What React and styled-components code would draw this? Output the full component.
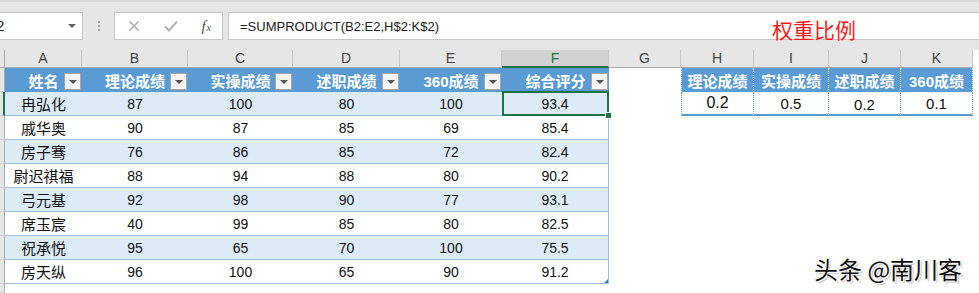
import React from 'react';
import styled, { createGlobalStyle } from 'styled-components';

const GlobalStyle = createGlobalStyle`
  body {
    margin: 0;
    background: #fff;
  }
`;

const FONT = `"Liberation Sans", "Noto Sans CJK SC", sans-serif`;
const GREEN = '#217346';
const BLUE = '#5b9bd5';
const LINE = '#9bc2e6';

const COLS = [
  { key: 'A', w: 77 },
  { key: 'B', w: 106 },
  { key: 'C', w: 105 },
  { key: 'D', w: 107 },
  { key: 'E', w: 102 },
  { key: 'F', w: 107 },
  { key: 'G', w: 72 },
  { key: 'H', w: 73 },
  { key: 'I', w: 75 },
  { key: 'J', w: 72 },
  { key: 'K', w: 72 },
];

const HEADERS = ['姓名', '理论成绩', '实操成绩', '述职成绩', '360成绩', '综合评分'];

const ROWS = [
  ['冉弘化', 87, 100, 80, 100, '93.4'],
  ['戚华奥', 90, 87, 85, 69, '85.4'],
  ['房子骞', 76, 86, 85, 72, '82.4'],
  ['尉迟祺福', 88, 94, 88, 80, '90.2'],
  ['弓元基', 92, 98, 90, 77, '93.1'],
  ['席玉宸', 40, 99, 85, 80, '82.5'],
  ['祝承悦', 95, 65, 70, 100, '75.5'],
  ['房天纵', 96, 100, 65, 90, '91.2'],
];

const WEIGHTS = [
  { label: '理论成绩', value: '0.2', size: 16 },
  { label: '实操成绩', value: '0.5', size: 15 },
  { label: '述职成绩', value: '0.2', size: 15, low: true },
  { label: '360成绩', value: '0.1', size: 15 },
];

const Page = styled.div`
  position: relative;
  width: 979px;
  height: 293px;
  overflow: hidden;
  background: #e6e6e6;
  font-family: ${FONT};
`;

const TopStrip = styled.div`
  height: 12px;
  box-sizing: border-box;
  border-top: 2px solid #d9d9d9;
`;

const FormulaBar = styled.div`
  display: flex;
  height: 28px;
`;

const NameBox = styled.div`
  width: 83px;
  box-sizing: border-box;
  background: #fff;
  border: 1px solid #c6c6c6;
  border-left: none;
  display: flex;
  align-items: center;
  justify-content: space-between;
  padding-right: 6px;
  overflow: hidden;
  font-size: 14px;
  color: #222;
`;

const NameText = styled.span`
  margin-left: -12px;
`;

const DropArrow = styled.span`
  width: 0;
  height: 0;
  border-left: 4px solid transparent;
  border-right: 4px solid transparent;
  border-top: 4px solid #666;
`;

const Grip = styled.div`
  width: 31px;
  display: flex;
  flex-direction: column;
  align-items: center;
  justify-content: center;
  gap: 2px;
`;

const GripDot = styled.span`
  width: 2px;
  height: 2px;
  background: #a0a0a0;
`;

const FxBox = styled.div`
  width: 109px;
  box-sizing: border-box;
  background: #fff;
  border: 1px solid #c6c6c6;
  display: flex;
  align-items: center;
  justify-content: space-between;
  padding: 0 11px 0 13px;
`;

const Fx = styled.span`
  font-family: "Liberation Serif", serif;
  font-style: italic;
  font-size: 15px;
  color: #555;
  sub {
    font-size: 10px;
    vertical-align: 0;
    margin-left: 1px;
  }
`;

const FormulaInput = styled.div`
  flex: 1;
  margin-left: 5px;
  background: #fff;
  border: 1px solid #c6c6c6;
  border-right: none;
  display: flex;
  align-items: center;
  padding-left: 11px;
  font-size: 13px;
  color: #222;
`;

const Spacer = styled.div`
  height: 10px;
`;

const Sheet = styled.div`
  background: #fff;
`;

const Row = styled.div`
  display: flex;
  height: ${(p) => p.$h}px;
`;

const Corner = styled.div`
  width: 5px;
  flex: none;
  box-sizing: border-box;
  background: #e6e6e6;
  border-right: 1px solid #ababab;
  border-bottom: 1px solid #ababab;
`;

const RowHead = styled.div`
  width: 5px;
  flex: none;
  box-sizing: border-box;
  background: #e6e6e6;
  border-bottom: 1px solid #d0d0d0;
  border-right: ${(p) => (p.$active ? `2px solid ${GREEN}` : '1px solid #ababab')};
`;

const ColLetter = styled.div`
  width: ${(p) => p.$w}px;
  flex: none;
  box-sizing: border-box;
  background: ${(p) => (p.$active ? '#d2d2d2' : '#e6e6e6')};
  border-right: 1px solid #c6c6c6;
  border-bottom: ${(p) => (p.$active ? `2px solid ${GREEN}` : '1px solid #ababab')};
  text-align: center;
  font-size: 14px;
  line-height: 17px;
  color: ${(p) => (p.$active ? GREEN : '#444')};
`;

const TableHead = styled.div`
  width: ${(p) => p.$w}px;
  flex: none;
  box-sizing: border-box;
  background: ${BLUE};
  display: grid;
  grid-template-columns: 18px 1fr 17px;
  padding-right: 1px;
  align-items: center;
  color: #fff;
  font-weight: bold;
  font-size: 15px;
`;

const HeadLabel = styled.span`
  text-align: center;
  white-space: nowrap;
`;

const FilterButton = styled.span`
  align-self: end;
  margin-bottom: 2px;
  width: 17px;
  height: 17px;
  box-sizing: border-box;
  background: #f4f4f4;
  border: 1px solid #a6a6a6;
  display: flex;
  align-items: center;
  justify-content: center;
  &::after {
    content: '';
    margin-top: 1px;
    border-left: 4px solid transparent;
    border-right: 4px solid transparent;
    border-top: 4px solid #555;
  }
`;

const TableCell = styled.div`
  position: relative;
  width: ${(p) => p.$w}px;
  flex: none;
  box-sizing: border-box;
  background: ${(p) => (p.$band ? '#ddebf7' : '#fff')};
  border-bottom: 1px solid ${LINE};
  border-right: ${(p) => (p.$last ? `1px solid ${LINE}` : 'none')};
  display: flex;
  align-items: center;
  justify-content: center;
  font-size: ${(p) => (p.$name ? 15 : 14)}px;
  color: #111;
  white-space: nowrap;

  ${(p) =>
    p.$selected &&
    `
    &::after {
      content: '';
      position: absolute;
      top: -1px;
      left: 0;
      right: -1px;
      bottom: -1px;
      border: 2px solid ${GREEN};
    }
    &::before {
      content: '';
      position: absolute;
      right: -4px;
      bottom: -4px;
      width: 5px;
      height: 5px;
      background: ${GREEN};
      border: 1px solid #fff;
      z-index: 2;
    }
  `}

  ${(p) =>
    p.$corner &&
    `
    &::after {
      content: '';
      position: absolute;
      right: 0;
      bottom: 0;
      width: 0;
      height: 0;
      border-left: 4px solid transparent;
      border-bottom: 4px solid #4472c4;
    }
  `}
`;

const Blank = styled.div`
  width: ${(p) => p.$w}px;
  flex: none;
  background: #fff;
`;

const Fill = styled.div`
  flex: 1;
  background: #fff;
`;

const WeightHead = styled.div`
  width: ${(p) => p.$w}px;
  flex: none;
  box-sizing: border-box;
  background: ${BLUE};
  border-right: 1px dotted rgba(255, 255, 255, 0.85);
  border-left: ${(p) => (p.$first ? '1px dotted rgba(255,255,255,0.85)' : 'none')};
  display: flex;
  align-items: center;
  justify-content: center;
  color: #fff;
  font-weight: bold;
  font-size: 15px;
  white-space: nowrap;
`;

const WeightCell = styled.div`
  width: ${(p) => p.$w}px;
  flex: none;
  box-sizing: border-box;
  background: #fff;
  border-right: 1px dotted ${BLUE};
  border-left: ${(p) => (p.$first ? `1px dotted ${BLUE}` : 'none')};
  border-bottom: 2px solid ${BLUE};
  display: flex;
  align-items: center;
  justify-content: center;
  padding-top: ${(p) => (p.$low ? 3 : 0)}px;
  font-size: ${(p) => p.$size}px;
  color: #111;
`;

const Title = styled.div`
  position: absolute;
  left: 772px;
  top: 15px;
  font-family: "Noto Sans CJK SC", sans-serif;
  font-size: 21px;
  color: #ff1a1a;
  line-height: 28px;
`;

const Watermark = styled.div`
  position: absolute;
  left: 814px;
  top: 253px;
  font-family: "Noto Sans CJK SC", sans-serif;
  font-size: 24px;
  line-height: 32px;
  color: #111;
  white-space: nowrap;
  text-shadow: 1px 1px 0 #fff, -1px 0 0 #fff, 2px 2px 1px rgba(0, 0, 0, 0.25);
`;

const CrossIcon = () => (
  <svg width="12" height="12" viewBox="0 0 12 12">
    <path d="M1.5 1.5 L10.5 10.5 M10.5 1.5 L1.5 10.5" stroke="#a8a8a8" strokeWidth="1.4" fill="none" />
  </svg>
);

const CheckIcon = () => (
  <svg width="14" height="12" viewBox="0 0 14 12">
    <path d="M1 6.5 L5 10.5 L13 1.5" stroke="#b4b4b4" strokeWidth="2" fill="none" />
  </svg>
);

export default function App() {
  const tableCols = COLS.slice(0, 6);
  const weightCols = COLS.slice(7);

  return (
    <Page>
      <GlobalStyle />
      <TopStrip />
      <FormulaBar>
        <NameBox>
          <NameText>F2</NameText>
          <DropArrow />
        </NameBox>
        <Grip>
          <GripDot />
          <GripDot />
          <GripDot />
        </Grip>
        <FxBox>
          <CrossIcon />
          <CheckIcon />
          <Fx>
            f<sub>x</sub>
          </Fx>
        </FxBox>
        <FormulaInput>=SUMPRODUCT(B2:E2,H$2:K$2)</FormulaInput>
      </FormulaBar>
      <Spacer />

      <Sheet>
        <Row $h={18}>
          <Corner />
          {COLS.map((c) => (
            <ColLetter key={c.key} $w={c.w} $active={c.key === 'F'}>
              {c.key}
            </ColLetter>
          ))}
          <Fill />
        </Row>

        <Row $h={24}>
          <RowHead />
          {tableCols.map((c, i) => (
            <TableHead key={c.key} $w={c.w}>
              <span />
              <HeadLabel>{HEADERS[i]}</HeadLabel>
              <FilterButton />
            </TableHead>
          ))}
          <Blank $w={COLS[6].w} />
          {weightCols.map((c, i) => (
            <WeightHead key={c.key} $w={c.w} $first={i === 0}>
              {WEIGHTS[i].label}
            </WeightHead>
          ))}
          <Fill />
        </Row>

        {ROWS.map((r, ri) => (
          <Row key={ri} $h={24}>
            <RowHead $active={ri === 0} />
            {tableCols.map((c, ci) => (
              <TableCell
                key={c.key}
                $w={c.w}
                $band={ri % 2 === 0}
                $name={ci === 0}
                $last={ci === 5}
                $selected={ri === 0 && ci === 5}
                $corner={ri === ROWS.length - 1 && ci === 5}
              >
                {r[ci]}
              </TableCell>
            ))}
            <Blank $w={COLS[6].w} />
            {ri === 0 &&
              weightCols.map((c, i) => (
                <WeightCell
                  key={c.key}
                  $w={c.w}
                  $first={i === 0}
                  $size={WEIGHTS[i].size}
                  $low={WEIGHTS[i].low}
                >
                  {WEIGHTS[i].value}
                </WeightCell>
              ))}
            <Fill />
          </Row>
        ))}

        <Row $h={9}>
          <RowHead />
          <Fill />
        </Row>
      </Sheet>

      <Title>权重比例</Title>
      <Watermark>头条 @南川客</Watermark>
    </Page>
  );
}
